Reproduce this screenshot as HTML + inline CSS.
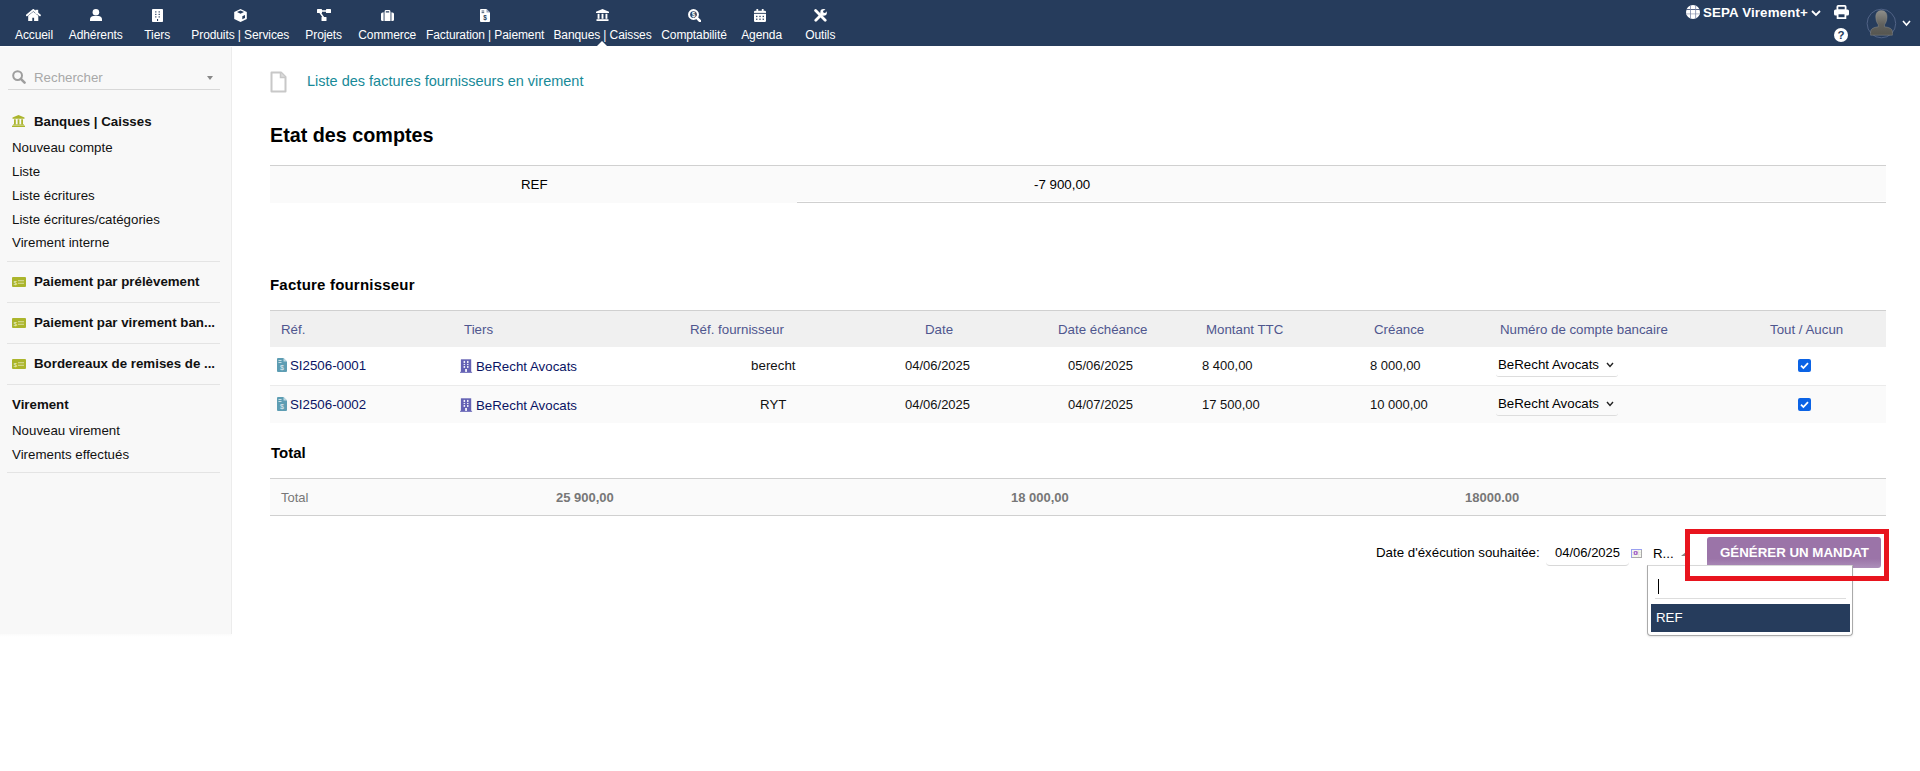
<!DOCTYPE html>
<html><head><meta charset="utf-8">
<style>
*{box-sizing:border-box;margin:0;padding:0}
html,body{width:1920px;height:771px;overflow:hidden;background:#fff;font-family:"Liberation Sans",sans-serif;color:#000}
.a{position:absolute;white-space:nowrap;line-height:1}
</style></head><body>
<div style="position:absolute;left:0px;top:0px;width:1920px;height:46px;background:#263c5c;"></div>
<div style="position:absolute;left:0px;top:46px;width:1920px;height:1px;background:#fff;"></div>
<svg style="position:absolute;left:26px;top:9px;" width="15" height="12" viewBox="0 0 15 12"><path d="M0.9 6.3 L7.3 1 L13.9 6.3" stroke="#fff" stroke-width="1.9" fill="none" stroke-linecap="round"/><rect x="9.4" y="0.8" width="2.8" height="4" fill="#fff"/><path d="M2.2 6.8 L7.3 2.8 L12.3 6.8 L12.3 12 L8.1 12 L8.1 8.8 L6.3 8.8 L6.3 12 L2.2 12 Z" fill="#fff"/></svg>
<div class="a" style="left:34px;top:29px;font-size:12px;letter-spacing:-0.1px;color:#fff;transform:translateX(-50%)">Accueil</div>
<svg style="position:absolute;left:90px;top:9px;" width="12" height="12" viewBox="0 0 12 12"><circle cx="5.9" cy="3.3" r="3.3" fill="#fff"/><path d="M0 12 L0 10.2 C0 8.3 1.5 7 3.5 7 L8.5 7 C10.5 7 12 8.3 12 10.2 L12 12 Z" fill="#fff"/></svg>
<div class="a" style="left:95.7px;top:29px;font-size:12px;letter-spacing:-0.1px;color:#fff;transform:translateX(-50%)">Adhérents</div>
<svg style="position:absolute;left:152px;top:9px;" width="11" height="13" viewBox="0 0 11 13"><rect x="0" y="0" width="11" height="13" rx="0.8" fill="#fff"/><g fill="#263c5c"><rect x="3.2" y="2.3" width="1.2" height="1.2"/><rect x="6.6" y="2.3" width="1.2" height="1.2"/><rect x="3.2" y="4.8" width="1.2" height="1.2"/><rect x="6.6" y="4.8" width="1.2" height="1.2"/><rect x="3.2" y="7.3" width="1.2" height="1.2"/><rect x="6.6" y="7.3" width="1.2" height="1.2"/><rect x="5" y="10" width="1.1" height="2"/></g></svg>
<div class="a" style="left:157.2px;top:29px;font-size:12px;letter-spacing:-0.1px;color:#fff;transform:translateX(-50%)">Tiers</div>
<svg style="position:absolute;left:234px;top:9px;" width="13" height="13" viewBox="0 0 13 13"><path d="M6.5 0 L12.8 2.9 L12.8 10.1 L6.5 13 L0.2 10.1 L0.2 2.9 Z" fill="#fff"/><path d="M3 3.1 L6.5 1.6 L10 3.1 L6.5 4.7 Z" fill="#263c5c"/><path d="M8.3 7.2 L11 6 L11 9 L8.3 10.3 Z" fill="#263c5c"/></svg>
<div class="a" style="left:240.3px;top:29px;font-size:12px;letter-spacing:-0.1px;color:#fff;transform:translateX(-50%)">Produits | Services</div>
<svg style="position:absolute;left:317px;top:9px;" width="14" height="12" viewBox="0 0 14 12"><rect x="0" y="0" width="5" height="4" rx="0.6" fill="#fff"/><rect x="9" y="0" width="5" height="4" rx="0.6" fill="#fff"/><rect x="4.5" y="8" width="5" height="4" rx="0.6" fill="#fff"/><path d="M3 3.5 L6.5 8.5 M4.5 2 L9.5 2" stroke="#fff" stroke-width="1.5"/></svg>
<div class="a" style="left:323.7px;top:29px;font-size:12px;letter-spacing:-0.1px;color:#fff;transform:translateX(-50%)">Projets</div>
<svg style="position:absolute;left:381px;top:10px;" width="13" height="11" viewBox="0 0 13 11"><rect x="0" y="2.5" width="13" height="8.5" rx="1.5" fill="#fff"/><rect x="4.2" y="0.6" width="4.6" height="3" rx="0.8" fill="none" stroke="#fff" stroke-width="1.2"/><rect x="2.6" y="2.5" width="0.9" height="8.5" fill="#263c5c"/><rect x="9.5" y="2.5" width="0.9" height="8.5" fill="#263c5c"/></svg>
<div class="a" style="left:387.2px;top:29px;font-size:12px;letter-spacing:-0.1px;color:#fff;transform:translateX(-50%)">Commerce</div>
<svg style="position:absolute;left:480px;top:9px;" width="10" height="13" viewBox="0 0 10 13"><path d="M0 1 Q0 0 1 0 L6.5 0 L10 3.5 L10 12 Q10 13 9 13 L1 13 Q0 13 0 12 Z" fill="#fff"/><path d="M6.5 0 L6.5 3.5 L10 3.5 Z" fill="#9aa6bd"/><rect x="1.6" y="1.6" width="2.6" height="0.8" fill="#263c5c"/><rect x="1.6" y="3.3" width="2.6" height="0.8" fill="#263c5c"/><text x="5" y="11.2" font-size="6.5" text-anchor="middle" fill="#263c5c" font-family="Liberation Sans" font-weight="bold">$</text></svg>
<div class="a" style="left:485.1px;top:29px;font-size:12px;letter-spacing:-0.1px;color:#fff;transform:translateX(-50%)">Facturation | Paiement</div>
<svg style="position:absolute;left:596px;top:9px;" width="13" height="12" viewBox="0 0 13 12"><path d="M6.5 0 L13 2.8 L13 4 L0 4 L0 2.8 Z" fill="#fff"/><rect x="1.6" y="4.8" width="1.9" height="5" fill="#fff"/><rect x="5.55" y="4.8" width="1.9" height="5" fill="#fff"/><rect x="9.5" y="4.8" width="1.9" height="5" fill="#fff"/><rect x="0.5" y="10.2" width="12" height="1.8" fill="#fff"/></svg>
<div class="a" style="left:602.5px;top:29px;font-size:12px;letter-spacing:-0.1px;color:#fff;transform:translateX(-50%)">Banques | Caisses</div>
<svg style="position:absolute;left:688px;top:9px;" width="13" height="13" viewBox="0 0 13 13"><circle cx="5.5" cy="5.5" r="4.4" fill="none" stroke="#fff" stroke-width="2.1"/><path d="M8.6 8.6 L12 12" stroke="#fff" stroke-width="2.6" stroke-linecap="round"/><text x="5.5" y="8" font-size="6.5" text-anchor="middle" fill="#fff" font-family="Liberation Sans" font-weight="bold">$</text></svg>
<div class="a" style="left:694px;top:29px;font-size:12px;letter-spacing:-0.1px;color:#fff;transform:translateX(-50%)">Comptabilité</div>
<svg style="position:absolute;left:754px;top:9px;" width="12" height="13" viewBox="0 0 12 13"><rect x="0" y="1.8" width="12" height="11.2" rx="1.2" fill="#fff"/><rect x="2.4" y="0" width="1.8" height="3" rx="0.5" fill="#fff"/><rect x="7.8" y="0" width="1.8" height="3" rx="0.5" fill="#fff"/><g fill="#263c5c"><rect x="0" y="3.9" width="12" height="0.9"/><rect x="2.1" y="6.8" width="1.3" height="1.3"/><rect x="5.35" y="6.8" width="1.3" height="1.3"/><rect x="8.6" y="6.8" width="1.3" height="1.3"/><rect x="2.1" y="9.6" width="1.3" height="1.3"/><rect x="5.35" y="9.6" width="1.3" height="1.3"/><rect x="8.6" y="9.6" width="1.3" height="1.3"/></g></svg>
<div class="a" style="left:761.6px;top:29px;font-size:12px;letter-spacing:-0.1px;color:#fff;transform:translateX(-50%)">Agenda</div>
<svg style="position:absolute;left:814px;top:9px;" width="13" height="13" viewBox="0 0 13 13"><path d="M1.6 1.6 L11.2 11.2" stroke="#fff" stroke-width="2.8" stroke-linecap="round"/><path d="M1.8 11.2 L8 5" stroke="#fff" stroke-width="2.8" stroke-linecap="round"/><circle cx="9.6" cy="3.4" r="3.3" fill="#fff"/><circle cx="10.4" cy="2.6" r="1.3" fill="#263c5c"/><path d="M10.4 1.3 L13 -1.3 L14.3 0 L11.7 3.9 Z" fill="#263c5c"/></svg>
<div class="a" style="left:820.3px;top:29px;font-size:12px;letter-spacing:-0.1px;color:#fff;transform:translateX(-50%)">Outils</div>
<svg style="position:absolute;left:597px;top:41px;" width="10" height="5" viewBox="0 0 10 5"><path d="M0 5 L5 0 L10 5 Z" fill="#fff"/></svg>
<svg style="position:absolute;left:1686px;top:5px;" width="14" height="14" viewBox="0 0 14 14"><circle cx="7" cy="7" r="7" fill="#fff"/><rect x="0" y="4" width="14" height="0.9" fill="#44557a"/><rect x="0" y="8.2" width="14" height="1.3" fill="#c6c9d4"/><rect x="4" y="0" width="0.8" height="14" fill="#7a86a8"/><rect x="9.3" y="0" width="0.8" height="14" fill="#7a86a8"/></svg>
<div class="a" style="left:1703px;top:6px;font-size:13.3px;color:#fff;font-weight:bold;letter-spacing:0.15px;">SEPA Virement+</div>
<svg style="position:absolute;left:1811px;top:10px;" width="10" height="7" viewBox="0 0 10 7"><path d="M1 1 L5 5 L9 1" stroke="#fff" stroke-width="1.8" fill="none"/></svg>
<svg style="position:absolute;left:1834px;top:5px;" width="15" height="14" viewBox="0 0 15 14"><rect x="3.4" y="0.9" width="8.2" height="4.5" rx="0.8" fill="none" stroke="#fff" stroke-width="1.8"/><rect x="0" y="4.5" width="15" height="6" rx="1.5" fill="#fff"/><rect x="3.6" y="8.4" width="7.8" height="4.7" fill="#263c5c" stroke="#fff" stroke-width="1.8"/></svg>
<svg style="position:absolute;left:1834px;top:28px;" width="14" height="14" viewBox="0 0 14 14"><circle cx="7" cy="7" r="7" fill="#fff"/><text x="7" y="11.2" font-size="11.5" font-weight="bold" text-anchor="middle" fill="#263c5c" font-family="Liberation Sans">?</text></svg>
<svg style="position:absolute;left:1866px;top:8px;" width="31" height="31" viewBox="0 0 31 31"><defs><linearGradient id="hg" x1="0" y1="0" x2="0" y2="1"><stop offset="0" stop-color="#8e8e8a"/><stop offset="0.55" stop-color="#62625e"/><stop offset="1" stop-color="#55554f"/></linearGradient></defs><circle cx="15.4" cy="15.5" r="14.3" fill="none" stroke="#55668a" stroke-width="0.9"/><path d="M15.4 2.5 C19.5 2.5 21.2 5.5 21 9.5 C20.8 13 19.5 15.5 18.5 16.8 L18.5 18.8 C23 19.3 26.4 20.5 26.4 24 L26.4 27.2 L4.6 27.2 L4.6 24 C4.6 20.5 8 19.3 12.3 18.8 L12.3 16.8 C11.3 15.5 10 13 9.8 9.5 C9.6 5.5 11.3 2.5 15.4 2.5 Z" fill="url(#hg)" stroke="#9a9a96" stroke-width="0.4"/></svg>
<svg style="position:absolute;left:1902px;top:20px;" width="9" height="7" viewBox="0 0 9 7"><path d="M1 1 L4.5 5 L8 1" stroke="#fff" stroke-width="1.6" fill="none"/></svg>
<div style="position:absolute;left:0px;top:47px;width:231px;height:587px;background:#f8f8f8;"></div>
<div style="position:absolute;left:231px;top:47px;width:1px;height:587px;background:#ececec;"></div>
<div style="position:absolute;left:0px;top:634px;width:232px;height:3px;background:linear-gradient(#fbfbfb,#fff);"></div>
<svg style="position:absolute;left:12px;top:70px;" width="14" height="14" viewBox="0 0 14 14"><circle cx="5.6" cy="5.6" r="4.4" fill="none" stroke="#9e9e9e" stroke-width="2"/><path d="M8.8 8.8 L12.6 12.6" stroke="#9e9e9e" stroke-width="2.5" stroke-linecap="round"/></svg>
<div class="a" style="left:34px;top:71px;font-size:13.3px;color:#a8a8a8;">Rechercher</div>
<svg style="position:absolute;left:207px;top:76px;" width="6" height="4" viewBox="0 0 6 4"><path d="M0 0 L6 0 L3 4 Z" fill="#888"/></svg>
<div style="position:absolute;left:8px;top:89px;width:212px;height:1px;background:#d8d8d8;"></div>
<svg style="position:absolute;left:12px;top:115px;" width="13" height="12" viewBox="0 0 13 12"><path d="M6.5 0 L12.5 2.6 L12.5 3.8 L0.5 3.8 L0.5 2.6 Z" fill="#abb52c"/><rect x="2" y="4.3" width="1.8" height="5.3" fill="#abb52c"/><rect x="5.6" y="4.3" width="1.8" height="5.3" fill="#abb52c"/><rect x="9.2" y="4.3" width="1.8" height="5.3" fill="#abb52c"/><rect x="1" y="9.4" width="11" height="1" fill="#abb52c"/><rect x="0" y="10.6" width="13" height="1.4" fill="#abb52c"/></svg>
<div class="a" style="left:34px;top:115px;font-size:13.3px;color:#111;font-weight:bold;">Banques | Caisses</div>
<div class="a" style="left:12px;top:141px;font-size:13.3px;color:#111;">Nouveau compte</div>
<div class="a" style="left:12px;top:165px;font-size:13.3px;color:#111;">Liste</div>
<div class="a" style="left:12px;top:189px;font-size:13.3px;color:#111;">Liste écritures</div>
<div class="a" style="left:12px;top:213px;font-size:13.3px;color:#111;">Liste écritures/catégories</div>
<div class="a" style="left:12px;top:236px;font-size:13.3px;color:#111;">Virement interne</div>
<div style="position:absolute;left:7px;top:261px;width:213px;height:1px;background:#e4e4e4;"></div>
<div style="position:absolute;left:7px;top:302px;width:213px;height:1px;background:#e4e4e4;"></div>
<div style="position:absolute;left:7px;top:343px;width:213px;height:1px;background:#e4e4e4;"></div>
<div style="position:absolute;left:7px;top:384px;width:213px;height:1px;background:#e4e4e4;"></div>
<div style="position:absolute;left:7px;top:472px;width:213px;height:1px;background:#e4e4e4;"></div>
<svg style="position:absolute;left:12px;top:277px;" width="14" height="10" viewBox="0 0 14 10"><rect width="14" height="10" rx="1" fill="#abb52c"/><text x="3.3" y="7.6" font-size="6" fill="#f0f2d0" font-family="Liberation Sans" text-anchor="middle">$</text><rect x="6" y="3.3" width="6" height="0.9" fill="#e0e3ae"/><rect x="6" y="5.8" width="6" height="0.9" fill="#e0e3ae"/></svg>
<div class="a" style="left:34px;top:275px;font-size:13.3px;color:#111;font-weight:bold;">Paiement par prélèvement</div>
<svg style="position:absolute;left:12px;top:318px;" width="14" height="10" viewBox="0 0 14 10"><rect width="14" height="10" rx="1" fill="#abb52c"/><text x="3.3" y="7.6" font-size="6" fill="#f0f2d0" font-family="Liberation Sans" text-anchor="middle">$</text><rect x="6" y="3.3" width="6" height="0.9" fill="#e0e3ae"/><rect x="6" y="5.8" width="6" height="0.9" fill="#e0e3ae"/></svg>
<div class="a" style="left:34px;top:316px;font-size:13.3px;color:#111;font-weight:bold;">Paiement par virement ban...</div>
<svg style="position:absolute;left:12px;top:359px;" width="14" height="10" viewBox="0 0 14 10"><rect width="14" height="10" rx="1" fill="#abb52c"/><text x="3.3" y="7.6" font-size="6" fill="#f0f2d0" font-family="Liberation Sans" text-anchor="middle">$</text><rect x="6" y="3.3" width="6" height="0.9" fill="#e0e3ae"/><rect x="6" y="5.8" width="6" height="0.9" fill="#e0e3ae"/></svg>
<div class="a" style="left:34px;top:357px;font-size:13.3px;color:#111;font-weight:bold;">Bordereaux de remises de ...</div>
<div class="a" style="left:12px;top:398px;font-size:13.3px;color:#111;font-weight:bold;">Virement</div>
<div class="a" style="left:12px;top:424px;font-size:13.3px;color:#111;">Nouveau virement</div>
<div class="a" style="left:12px;top:448px;font-size:13.3px;color:#111;">Virements effectués</div>
<svg style="position:absolute;left:270px;top:71px;" width="17" height="22" viewBox="0 0 17 22"><path d="M1.5 1.5 L11 1.5 L15.5 6 L15.5 20.5 L1.5 20.5 Z" fill="#fff" stroke="#c8c8c8" stroke-width="2" stroke-linejoin="round"/><path d="M10.5 1.5 L10.5 6.5 L15.5 6.5" fill="#ddd" stroke="#c8c8c8" stroke-width="1.5"/></svg>
<div class="a" style="left:307px;top:74px;font-size:14.5px;color:#188a98;">Liste des factures fournisseurs en virement</div>
<div class="a" style="left:270px;top:126px;font-size:19.75px;color:#000;font-weight:bold;">Etat des comptes</div>
<div style="position:absolute;left:270px;top:165px;width:1616px;height:1px;background:#d0d0d0;"></div>
<div style="position:absolute;left:270px;top:166px;width:527px;height:37px;background:#fafafa;"></div>
<div style="position:absolute;left:797px;top:166px;width:1089px;height:35px;background:#fafafa;"></div>
<div style="position:absolute;left:797px;top:202px;width:1089px;height:1px;background:#d0d0d0;"></div>
<div class="a" style="left:521px;top:178px;font-size:13.3px;color:#000;">REF</div>
<div class="a" style="left:1034px;top:178px;font-size:13.3px;color:#000;">-7 900,00</div>
<div class="a" style="left:270px;top:277px;font-size:15px;color:#000;font-weight:bold;letter-spacing:0.2px;">Facture fournisseur</div>
<div style="position:absolute;left:270px;top:310px;width:1616px;height:1px;background:#d0d0d0;"></div>
<div style="position:absolute;left:270px;top:311px;width:1616px;height:36px;background:#f0f0f0;"></div>
<div style="position:absolute;left:270px;top:385px;width:1616px;height:1px;background:#ebebeb;"></div>
<div style="position:absolute;left:270px;top:386px;width:1616px;height:37px;background:#fafafa;"></div>
<div class="a" style="left:281px;top:323px;font-size:13.3px;color:#4f568e;">Réf.</div>
<div class="a" style="left:464px;top:323px;font-size:13.3px;color:#4f568e;">Tiers</div>
<div class="a" style="left:690px;top:323px;font-size:13.3px;color:#4f568e;">Réf. fournisseur</div>
<div class="a" style="left:925px;top:323px;font-size:13.3px;color:#4f568e;">Date</div>
<div class="a" style="left:1058px;top:323px;font-size:13.3px;color:#4f568e;">Date échéance</div>
<div class="a" style="left:1206px;top:323px;font-size:13.3px;color:#4f568e;">Montant TTC</div>
<div class="a" style="left:1374px;top:323px;font-size:13.3px;color:#4f568e;">Créance</div>
<div class="a" style="left:1500px;top:323px;font-size:13.3px;color:#4f568e;">Numéro de compte bancaire</div>
<div class="a" style="left:1770px;top:323px;font-size:13.3px;color:#4f568e;">Tout / Aucun</div>
<svg style="position:absolute;left:277px;top:358px;" width="10" height="14" viewBox="0 0 10 14"><path d="M0 1 Q0 0 1 0 L6.5 0 L10 3.5 L10 13 Q10 14 9 14 L1 14 Q0 14 0 13 Z" fill="#5d9db3"/><path d="M6.5 0 L6.5 3.5 L10 3.5 Z" fill="#bcd8e2"/><rect x="1.5" y="2" width="3" height="0.9" fill="#d6e8ee"/><rect x="1.5" y="4" width="3" height="0.9" fill="#d6e8ee"/><text x="5" y="12" font-size="7" text-anchor="middle" fill="#e6f2f6" font-family="Liberation Sans">$</text></svg>
<div class="a" style="left:290px;top:359px;font-size:13.3px;color:#0a1464;">SI2506-0001</div>
<svg style="position:absolute;left:460px;top:359px;" width="13" height="15" viewBox="0 0 13 15"><rect x="0.9" y="0.3" width="10.3" height="13" fill="#6462b4"/><rect x="0" y="12.8" width="12.1" height="1" fill="#6a68b8"/><g fill="#fff" opacity="0.9"><rect x="3.6" y="1.9" width="1.5" height="2.1"/><rect x="7" y="1.9" width="1.5" height="2.1"/><rect x="3.6" y="4.9" width="1.5" height="1.2"/><rect x="7" y="4.9" width="1.5" height="1.2"/><rect x="3.6" y="7" width="1.5" height="1.9"/><rect x="7" y="7" width="1.5" height="1.9"/><rect x="5.1" y="10" width="1.9" height="2.9"/></g></svg>
<div class="a" style="left:476px;top:360px;font-size:13.3px;color:#0a1464;">BeRecht Avocats</div>
<div class="a" style="left:773.3px;top:359px;font-size:13.3px;color:#111;transform:translateX(-50%);">berecht</div>
<div class="a" style="left:905px;top:359px;font-size:13px;color:#111;">04/06/2025</div>
<div class="a" style="left:1068px;top:359px;font-size:13px;color:#111;">05/06/2025</div>
<div class="a" style="left:1202px;top:359px;font-size:13px;color:#111;">8 400,00</div>
<div class="a" style="left:1370px;top:359px;font-size:13px;color:#111;">8 000,00</div>
<div style="position:absolute;left:1496px;top:351px;width:122px;height:26px;background:transparent;border-bottom:1px solid #ddd;border-radius:3px;"></div>
<div class="a" style="left:1498px;top:358px;font-size:13.3px;color:#000;">BeRecht Avocats</div>
<svg style="position:absolute;left:1606px;top:362px;" width="8" height="6" viewBox="0 0 8 6"><path d="M1 1 L4 4.5 L7 1" stroke="#222" stroke-width="1.4" fill="none"/></svg>
<svg style="position:absolute;left:1798px;top:359px;" width="13" height="13" viewBox="0 0 13 13"><rect width="13" height="13" rx="2" fill="#0b63e5"/><path d="M3 6.7 L5.4 9 L10 4.2" stroke="#fff" stroke-width="1.8" fill="none"/></svg>
<svg style="position:absolute;left:277px;top:397px;" width="10" height="14" viewBox="0 0 10 14"><path d="M0 1 Q0 0 1 0 L6.5 0 L10 3.5 L10 13 Q10 14 9 14 L1 14 Q0 14 0 13 Z" fill="#5d9db3"/><path d="M6.5 0 L6.5 3.5 L10 3.5 Z" fill="#bcd8e2"/><rect x="1.5" y="2" width="3" height="0.9" fill="#d6e8ee"/><rect x="1.5" y="4" width="3" height="0.9" fill="#d6e8ee"/><text x="5" y="12" font-size="7" text-anchor="middle" fill="#e6f2f6" font-family="Liberation Sans">$</text></svg>
<div class="a" style="left:290px;top:398px;font-size:13.3px;color:#0a1464;">SI2506-0002</div>
<svg style="position:absolute;left:460px;top:398px;" width="13" height="15" viewBox="0 0 13 15"><rect x="0.9" y="0.3" width="10.3" height="13" fill="#6462b4"/><rect x="0" y="12.8" width="12.1" height="1" fill="#6a68b8"/><g fill="#fff" opacity="0.9"><rect x="3.6" y="1.9" width="1.5" height="2.1"/><rect x="7" y="1.9" width="1.5" height="2.1"/><rect x="3.6" y="4.9" width="1.5" height="1.2"/><rect x="7" y="4.9" width="1.5" height="1.2"/><rect x="3.6" y="7" width="1.5" height="1.9"/><rect x="7" y="7" width="1.5" height="1.9"/><rect x="5.1" y="10" width="1.9" height="2.9"/></g></svg>
<div class="a" style="left:476px;top:399px;font-size:13.3px;color:#0a1464;">BeRecht Avocats</div>
<div class="a" style="left:773.3px;top:398px;font-size:13.3px;color:#111;transform:translateX(-50%);">RYT</div>
<div class="a" style="left:905px;top:398px;font-size:13px;color:#111;">04/06/2025</div>
<div class="a" style="left:1068px;top:398px;font-size:13px;color:#111;">04/07/2025</div>
<div class="a" style="left:1202px;top:398px;font-size:13px;color:#111;">17 500,00</div>
<div class="a" style="left:1370px;top:398px;font-size:13px;color:#111;">10 000,00</div>
<div style="position:absolute;left:1496px;top:390px;width:122px;height:26px;background:transparent;border-bottom:1px solid #ddd;border-radius:3px;"></div>
<div class="a" style="left:1498px;top:397px;font-size:13.3px;color:#000;">BeRecht Avocats</div>
<svg style="position:absolute;left:1606px;top:401px;" width="8" height="6" viewBox="0 0 8 6"><path d="M1 1 L4 4.5 L7 1" stroke="#222" stroke-width="1.4" fill="none"/></svg>
<svg style="position:absolute;left:1798px;top:398px;" width="13" height="13" viewBox="0 0 13 13"><rect width="13" height="13" rx="2" fill="#0b63e5"/><path d="M3 6.7 L5.4 9 L10 4.2" stroke="#fff" stroke-width="1.8" fill="none"/></svg>
<div class="a" style="left:271px;top:445px;font-size:15px;color:#000;font-weight:bold;">Total</div>
<div style="position:absolute;left:270px;top:478px;width:1616px;height:1px;background:#d0d0d0;"></div>
<div style="position:absolute;left:270px;top:479px;width:1616px;height:36px;background:#fafafa;"></div>
<div style="position:absolute;left:270px;top:515px;width:1616px;height:1px;background:#d0d0d0;"></div>
<div class="a" style="left:281px;top:491px;font-size:13px;color:#777;">Total</div>
<div class="a" style="left:556px;top:491px;font-size:13px;color:#777;font-weight:bold;">25 900,00</div>
<div class="a" style="left:1011px;top:491px;font-size:13px;color:#777;font-weight:bold;">18 000,00</div>
<div class="a" style="left:1465px;top:491px;font-size:13px;color:#777;font-weight:bold;">18000.00</div>
<div class="a" style="left:1376px;top:546px;font-size:13.3px;color:#000;">Date d'éxécution souhaitée:</div>
<div style="position:absolute;left:1546px;top:540px;width:83px;height:26px;background:transparent;border-bottom:1px solid #d8d8d8;border-radius:4px;"></div>
<div class="a" style="left:1555px;top:546px;font-size:13px;color:#000;">04/06/2025</div>
<svg style="position:absolute;left:1631px;top:549px;" width="11" height="9" viewBox="0 0 11 9"><rect x="0" y="0" width="11" height="9" fill="#aaa"/><rect x="1" y="1" width="9" height="7" fill="#f4f6ee"/><rect x="0" y="0" width="11" height="1" fill="#9aa0f0"/><rect x="0" y="0" width="1" height="9" fill="#9aa0f0"/><g fill="#dfe2d6"><rect x="1" y="3" width="9" height="0.5"/><rect x="1" y="5.5" width="9" height="0.5"/><rect x="7.5" y="1" width="0.5" height="7"/></g><rect x="2.7" y="2" width="4" height="4" rx="1.2" fill="#a86cc8"/><rect x="4.3" y="3" width="0.8" height="2" fill="#fff"/></svg>
<div class="a" style="left:1653px;top:547px;font-size:13.3px;color:#000;">R...</div>
<svg style="position:absolute;left:1681px;top:552px;" width="5" height="4" viewBox="0 0 5 4"><path d="M0 4 L5 0 L5 4 Z" fill="#888"/></svg>
<div style="position:absolute;left:1707px;top:537px;width:174px;height:31px;background:linear-gradient(#9b74a8 0%,#9b74a8 70%,#ad8fba 100%);border-radius:3px;"></div>
<div class="a" style="left:1720px;top:546px;font-size:13.3px;color:#fff;font-weight:bold;">GÉNÉRER UN MANDAT</div>
<div style="position:absolute;left:1647px;top:565px;width:206px;height:71px;background:#fff;border:1px solid #aaa;border-top-color:#d8d8d8;border-radius:0 0 4px 4px;box-shadow:0 1px 2px rgba(0,0,0,.1);"></div>
<div style="position:absolute;left:1658px;top:579px;width:1px;height:15px;background:#000;"></div>
<div style="position:absolute;left:1655px;top:598px;width:191px;height:1px;background:#ddd;"></div>
<div style="position:absolute;left:1651px;top:604px;width:199px;height:28px;background:#263c5c;"></div>
<div class="a" style="left:1656px;top:611px;font-size:13.3px;color:#fff;">REF</div>
<div style="position:absolute;left:1685px;top:529px;width:204px;height:52px;background:transparent;border:5px solid #e8141e;"></div>
</body></html>
